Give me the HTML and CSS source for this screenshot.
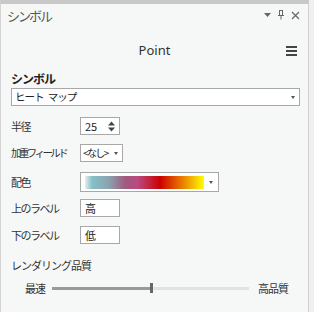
FILE: index.html
```html
<!DOCTYPE html>
<html lang="ja">
<head>
  <meta charset="UTF-8">
  <title>シンボル</title>
  <link rel="stylesheet" href="styles.css">
</head>
<body>
  <div class="pane">
    <div class="titlebar">
      <span class="title">シンボル</span>
      <div class="win-icons">
        <svg width="7" height="5" viewBox="0 0 7 5"><path d="M0 0h7L3.5 4z" fill="#666"/></svg>
        <svg width="8" height="10" viewBox="0 0 8 10"><path d="M2 0.5h4M2.5 0.5v5M5.5 0.5v5M1 5.5h6M4 5.5v4" stroke="#666" fill="none"/></svg>
        <svg width="9" height="9" viewBox="0 0 9 9"><path d="M1 1l7 7M8 1l-7 7" stroke="#666" stroke-width="1.2"/></svg>
      </div>
    </div>

    <div class="head">
      <span class="head-title">Point</span>
      <svg class="menu" width="11" height="10" viewBox="0 0 11 10"><path d="M0 1h11M0 5h11M0 9h11" stroke="#444" stroke-width="2"/></svg>
    </div>

    <div class="section">
      <div class="section-title">シンボル</div>
      <div class="select wide"><span>ヒート <span class="gap">マップ</span></span><i class="caret"></i></div>

      <div class="row r-radius">
        <label>半径</label>
        <div class="box spin"><span>25</span>
          <svg width="7" height="11" viewBox="0 0 7 11"><path d="M0 4.5h7L3.5 0.5zM0 6.5h7L3.5 10.5z" fill="#444"/></svg>
        </div>
      </div>
      <div class="row">
        <label class="tight">加重フィールド</label>
        <div class="box small-select"><span>&lt;なし&gt;</span><i class="caret"></i></div>
      </div>
      <div class="row r-ramp">
        <label>配色</label>
        <div class="box ramp"><div class="gradient"></div><i class="caret"></i></div>
      </div>
      <div class="row r-upper">
        <label>上のラベル</label>
        <div class="box text"><span>高</span></div>
      </div>
      <div class="row">
        <label>下のラベル</label>
        <div class="box text"><span>低</span></div>
      </div>

      <div class="quality">レンダリング品質</div>
      <div class="slider-row">
        <span>最速</span>
        <div class="slider">
          <div class="fill" style="width: 50%"></div>
          <div class="thumb"></div>
        </div>
        <span>高品質</span>
      </div>
    </div>
  </div>
</body>
</html>
```

FILE: styles.css
```css
body {
  margin: 0;
  font-family: "Noto Sans", "Noto Sans CJK JP", sans-serif;
  background-color: #f0f0f0;
  color: #333;
}

.pane {
  width: 307px;
  height: 308px;
  background-color: #f6f8f8;
  border-top: 4px solid #c8c8c8;
  border-left: 1px solid #d4d4d4;
  border-right: 1px solid #d0d0d0;
  position: relative;
}

.titlebar {
  display: flex;
  justify-content: space-between;
  align-items: center;
  height: 22px;
  padding: 0 8px 0 6px;
}

.title {
  font-family: "Noto Sans CJK JP", sans-serif;
  font-size: 13px;
  letter-spacing: -2px;
  color: #555;
}

.win-icons {
  display: flex;
  align-items: center;
  gap: 6px;
}

.head {
  height: 44px;
  display: flex;
  align-items: center;
  justify-content: center;
  position: relative;
}

.head-title {
  font-size: 13px;
  color: #333;
  margin-top: 3px;
}

.menu {
  position: absolute;
  right: 11px;
  top: 20px;
}

.section {
  padding: 0 8px 0 10px;
  font-family: "Noto Sans CJK JP", sans-serif;
  line-height: 14px;
}

.section-title {
  font-size: 12px;
  font-weight: bold;
  letter-spacing: -1px;
  color: #222;
  height: 18px;
  line-height: 17px;
}

.select, .box {
  background-color: #fff;
  border: 1px solid #a8a8a8;
  box-sizing: border-box;
  display: flex;
  align-items: center;
  font-size: 11px;
  color: #222;
  white-space: nowrap;
  flex-shrink: 0;
}

.wide {
  height: 18px;
  padding: 0 4px 0 3px;
  justify-content: space-between;
  font-size: 10.5px;
  letter-spacing: -1px;
}

.wide .gap {
  margin-left: 3px;
}

.caret {
  width: 0;
  height: 0;
  flex-shrink: 0;
  border-left: 2.5px solid transparent;
  border-right: 2.5px solid transparent;
  border-top: 3px solid #555;
}

.row {
  display: flex;
  align-items: center;
  height: 18px;
  margin-top: 9px;
  font-size: 11px;
}

.row label {
  width: 69px;
  flex-shrink: 0;
  white-space: nowrap;
  letter-spacing: -1.5px;
  color: #333;
}

.row label.tight {
  font-size: 10.5px;
  letter-spacing: -2.6px;
}

.r-radius {
  margin-top: 11px;
}

.spin {
  width: 40px;
  height: 18px;
  padding: 0 4px;
  justify-content: space-between;
}

.small-select {
  width: 43px;
  height: 18px;
  padding: 0 4px 0 2px;
  justify-content: space-between;
  font-size: 10px;
  letter-spacing: -1.6px;
}

.r-ramp {
  height: 20px;
  margin-top: 10px;
}

.r-upper {
  margin-top: 7px;
}

.ramp {
  width: 139px;
  height: 20px;
  padding: 0 5px 0 4px;
  justify-content: space-between;
}

.gradient {
  width: 119px;
  height: 13px;
  background: linear-gradient(to right, #e8eeee 0%, #84c0c8 6%, #8aa3b0 20%, #a0597f 34%, #b94b80 44%, #cc0000 63%, #e56400 78%, #f1a800 88%, #ffff00 100%);
}

.text {
  width: 40px;
  height: 18px;
  padding: 0 4px;
}

.quality {
  font-size: 11px;
  letter-spacing: -1px;
  color: #333;
  margin-top: 14px;
}

.slider-row {
  display: flex;
  align-items: center;
  font-size: 11px;
  letter-spacing: -1px;
  color: #333;
  margin-top: 9px;
  padding-left: 14px;
}

.slider {
  width: 197px;
  height: 3px;
  background-color: #e2e2e2;
  margin: 0 9px 0 7px;
  position: relative;
}

.fill {
  height: 3px;
  background-color: #999;
}

.thumb {
  position: absolute;
  left: 98px;
  top: -4px;
  width: 3px;
  height: 10px;
  background-color: #666;
}
```
